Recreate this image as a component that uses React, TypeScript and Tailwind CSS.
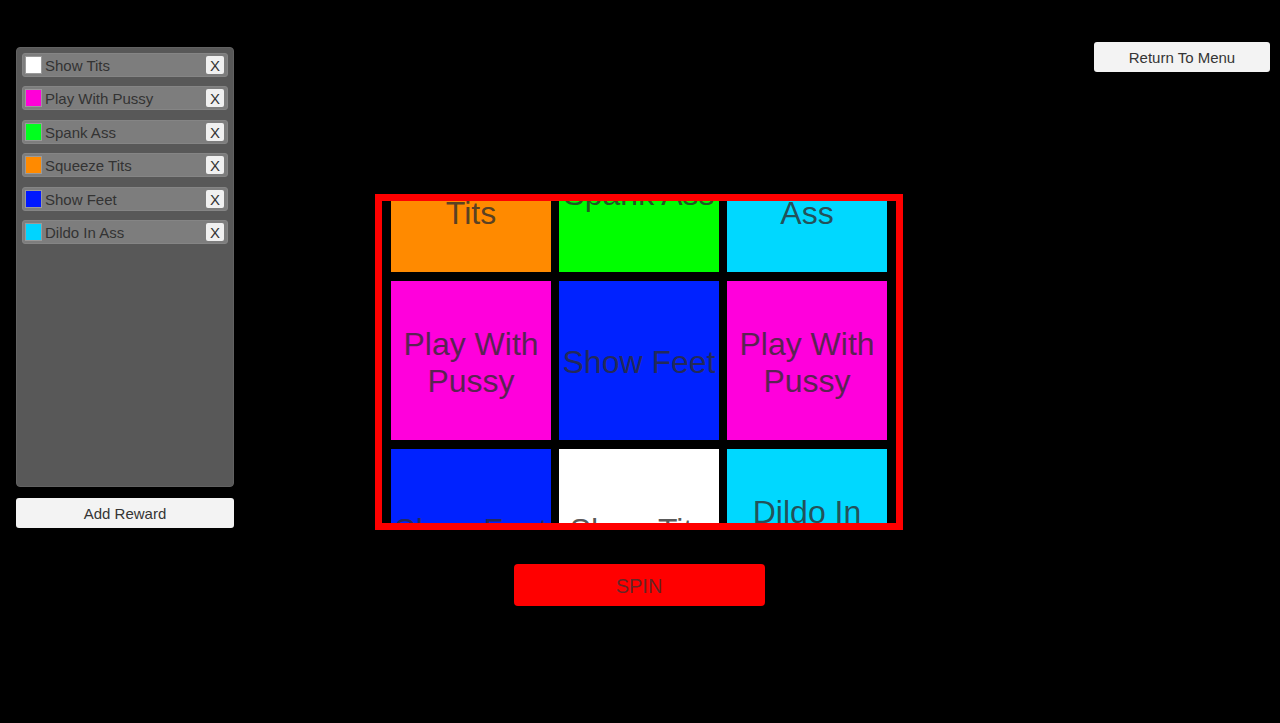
import React from "react";

const rewards = [
  { name: "Show Tits", color: "#ffffff" },
  { name: "Play With Pussy", color: "#ff00d8" },
  { name: "Spank Ass", color: "#00ff1e" },
  { name: "Squeeze Tits", color: "#ff8a00" },
  { name: "Show Feet", color: "#0018ff" },
  { name: "Dildo In Ass", color: "#00d4ff" },
];

const cells = [
  { name: "Squeeze Tits", color: "#ff8a00" },
  { name: "Spank Ass", color: "#00ff00" },
  { name: "Dildo In Ass", color: "#00d8ff" },
  { name: "Play With Pussy", color: "#ff00dc" },
  { name: "Show Feet", color: "#0022ff" },
  { name: "Play With Pussy", color: "#ff00dc" },
  { name: "Show Feet", color: "#0022ff" },
  { name: "Show Tits", color: "#ffffff" },
  { name: "Dildo In Ass", color: "#00d8ff" },
];

export default function App() {
  return (
    <div
      className="w-full h-[723px] bg-black flex overflow-hidden"
      style={{ fontFamily: '"Liberation Sans", Arial, sans-serif' }}
    >
      {/* Left column */}
      <div className="ml-[16px] mt-[47px] w-[218px] flex flex-col gap-[11px] shrink-0">
        <div className="h-[440px] bg-[#585858] rounded-[4px] border border-[#626262] px-[5px] pt-[5px] flex flex-col gap-[9.4px]">
          {rewards.map((r) => (
            <div
              key={r.name}
              className="h-[24px] bg-[#7d7d7d] rounded-[3px] border border-[#858585] flex items-center pl-[2px] pr-[3px]"
            >
              <div
                className="w-[17px] h-[18px] border border-[#9a9a9a] shrink-0"
                style={{ backgroundColor: r.color }}
              />
              <span className="ml-[3px] pt-[1px] text-[15px] leading-none text-[#333333] flex-1 whitespace-nowrap">
                {r.name}
              </span>
              <div className="w-[18px] h-[18px] bg-[#f0f0f0] rounded-[2px] flex items-center justify-center pt-[1px] text-[15px] leading-none text-[#333333]">
                X
              </div>
            </div>
          ))}
        </div>
        <div className="h-[30px] bg-[#f3f3f3] rounded-[3px] flex items-center justify-center pt-[2px] text-[15px] text-[#353535]">
          Add Reward
        </div>
      </div>

      {/* Middle column */}
      <div className="ml-[141px] mt-[194px] flex flex-col items-center shrink-0">
        <div className="w-[528px] h-[336px] border-[7px] border-[#ff0000] bg-black overflow-hidden">
          <div className="mt-[-88px] ml-[9px] grid grid-cols-[160px_160px_160px] gap-x-[8px] gap-y-[9px]">
            {cells.map((c, i) => (
              <div
                key={i}
                className="h-[159px] flex items-center justify-center text-center pt-[4px] text-[32px] leading-[37px] text-[rgba(45,45,45,0.8)] overflow-hidden"
                style={{ backgroundColor: c.color }}
              >
                {c.name}
              </div>
            ))}
          </div>
        </div>
        <div className="mt-[34px] w-[251px] h-[42px] bg-[#ff0000] rounded-[4px] flex items-center justify-center pt-[2px] text-[20px] text-[rgba(50,50,50,0.75)]">
          SPIN
        </div>
      </div>

      {/* Right column */}
      <div className="ml-auto mr-[10px] mt-[42px] shrink-0">
        <div className="w-[176px] h-[30px] bg-[#f3f3f3] rounded-[3px] flex items-center justify-center pt-[2px] text-[15px] text-[#353535]">
          Return To Menu
        </div>
      </div>
    </div>
  );
}
